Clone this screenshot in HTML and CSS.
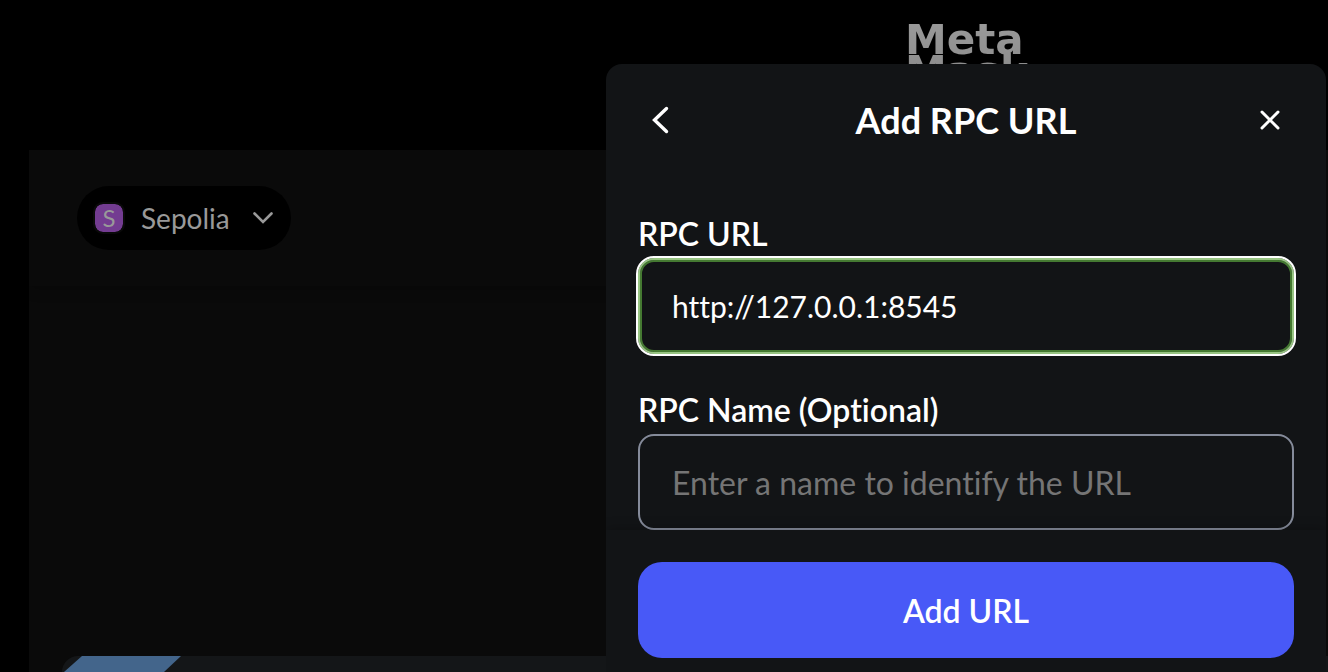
FILE: index.html
```html
<!DOCTYPE html>
<html lang="en">
<head>
<meta charset="utf-8">
<meta name="viewport" content="width=device-width, initial-scale=1">
<title>Add RPC URL</title>
<link rel="stylesheet" href="styles.css">
</head>
<body>
<div class="app">
  <header class="brand"><div class="wordmark">Meta<br>Mask</div></header>
  <main class="wallet">
    <div class="toolbar">
      <button class="network" type="button">
        <span class="network-badge">S</span>
        <span class="network-name">Sepolia</span>
        <svg class="network-caret" viewBox="0 0 20 12" aria-hidden="true"><path d="M1.500 1.500L10 10L18.500 1.500" fill="none" stroke="currentColor" stroke-width="2.600" stroke-linecap="round"/></svg>
      </button>
    </div>
    <section class="overview">
      <div class="banner">
        <svg class="banner-ribbon" viewBox="0 0 120 16" aria-hidden="true"><path d="M20 0H119L102 16H2Z" fill="#43658b"/></svg>
      </div>
    </section>
  </main>
</div>
<div class="modal" role="dialog" aria-labelledby="modal-title">
  <header class="modal-header">
    <button class="icon-button" type="button" aria-label="Back">
      <svg viewBox="0 0 32 32" aria-hidden="true"><path d="M20.500 4.500L8.500 16L20.500 27.500" transform="translate(0 0)" fill="none" stroke="currentColor" stroke-width="3.400" stroke-linecap="round"/></svg>
    </button>
    <h1 class="modal-title" id="modal-title">Add RPC URL</h1>
    <button class="icon-button" type="button" aria-label="Close">
      <svg viewBox="0 0 32 32" aria-hidden="true"><path d="M8 8L24 24M24 8L8 24" fill="none" stroke="currentColor" stroke-width="3" stroke-linecap="round"/></svg>
    </button>
  </header>
  <form class="modal-form">
    <div class="fields">
      <div class="field">
        <label for="rpc-url">RPC URL</label>
        <input class="text-field text-field-active" id="rpc-url" type="text" value="http://127.0.0.1:8545">
      </div>
      <div class="field">
        <label for="rpc-name">RPC Name (Optional)</label>
        <input class="text-field" id="rpc-name" type="text" placeholder="Enter a name to identify the URL">
      </div>
    </div>
    <footer class="modal-footer"><button class="submit" type="button">Add URL</button></footer>
  </form>
</div>
</body>
</html>
```
FILE: styles.css
```css
* { box-sizing: border-box; }
body {
  margin: 0;
  height: 100vh;
  overflow: hidden;
  background: #000;
  color: #fff;
  font-family: Lato, "Open Sans", sans-serif;
  font-variant-ligatures: none;
}
button, input { font: inherit; color: inherit; font-variant-ligatures: none; }
button { border: 0; cursor: pointer; }
.app {
  display: flex;
  flex-direction: column;
  height: 100%;
}
.brand {
  display: flex;
  justify-content: flex-end;
  height: 150px;
  padding: 24px 300px 0 0;
}
.wordmark {
  font: bold 42px/32px "DejaVu Sans", sans-serif;
  background: linear-gradient(#999, #777);
  background-clip: text;
  color: transparent;
}
.wallet {
  flex: 1;
  display: flex;
  flex-direction: column;
  margin-left: 29px;
  background: #0a0a0a;
}
.toolbar {
  padding: 36px 48px;
  box-shadow: 0 4px 12px rgba(0, 0, 0, 0.2);
}
.network {
  display: flex;
  align-items: center;
  gap: 18px;
  height: 64px;
  padding: 0 18px;
  border-radius: 32px;
  background: #000;
  color: #999;
  font-size: 28px;
}
.network-badge {
  display: grid;
  place-items: center;
  width: 28px;
  height: 28px;
  border-radius: 8px;
  background: #733c91;
  outline: 2px solid #0a0a0a;
  font-size: 24px;
  line-height: 28px;
}
.network-name { min-width: 94px; text-align: left; }
.network-caret { width: 20px; height: 12px; }
.overview {
  flex: 1;
  display: flex;
  flex-direction: column;
  justify-content: flex-end;
  padding-left: 33px;
}
.banner {
  height: 16px;
  overflow: hidden;
  border-radius: 20px 0 0 0;
  background: #141618;
}
.banner-ribbon { display: block; width: 120px; height: 16px; }
.modal {
  position: absolute;
  top: 64px;
  right: 2px;
  bottom: 0;
  display: flex;
  flex-direction: column;
  width: min(720px, 100% - 4px);
  overflow: hidden;
  border-radius: 16px 16px 0 0;
  background: #121416;
}
.modal-header {
  display: flex;
  align-items: center;
  justify-content: space-between;
  padding: 32px 40px;
}
.modal-title { margin: 0; font-size: 36px; line-height: 48px; font-weight: 700; }
.icon-button {
  display: grid;
  place-items: center;
  width: 32px;
  height: 32px;
  padding: 0;
  background: none;
}
.icon-button svg { width: 32px; height: 32px; }
.modal-form {
  flex: 1;
  display: flex;
  flex-direction: column;
}
.fields {
  display: flex;
  flex-direction: column;
  gap: 32px;
  padding: 34px 32px 0;
}
.field { display: flex; flex-direction: column; }
.field label { font-size: 32px; line-height: 48px; font-weight: 600; }
.text-field {
  width: 100%;
  height: 96px;
  padding: 0 32px;
  border: 2px solid #858b9a;
  border-radius: 16px;
  background: transparent;
  font-size: 32px;
  outline: none;
}
.text-field::placeholder { color: #757575; opacity: 1; }
.text-field-active {
  border-color: #98c583;
  outline: 2px solid #fff;
  box-shadow: inset 0 0 0 2px #457a32;
  font-size: 30px;
}
.modal-footer {
  flex: 1;
  padding: 32px 32px 14px;
  background: #121416;
  box-shadow: 0 0 12px rgba(0, 0, 0, 0.3);
}
.submit {
  width: 100%;
  height: 96px;
  border-radius: 24px;
  background: #4859f7;
  font-size: 32px;
  font-weight: 600;
}
```
